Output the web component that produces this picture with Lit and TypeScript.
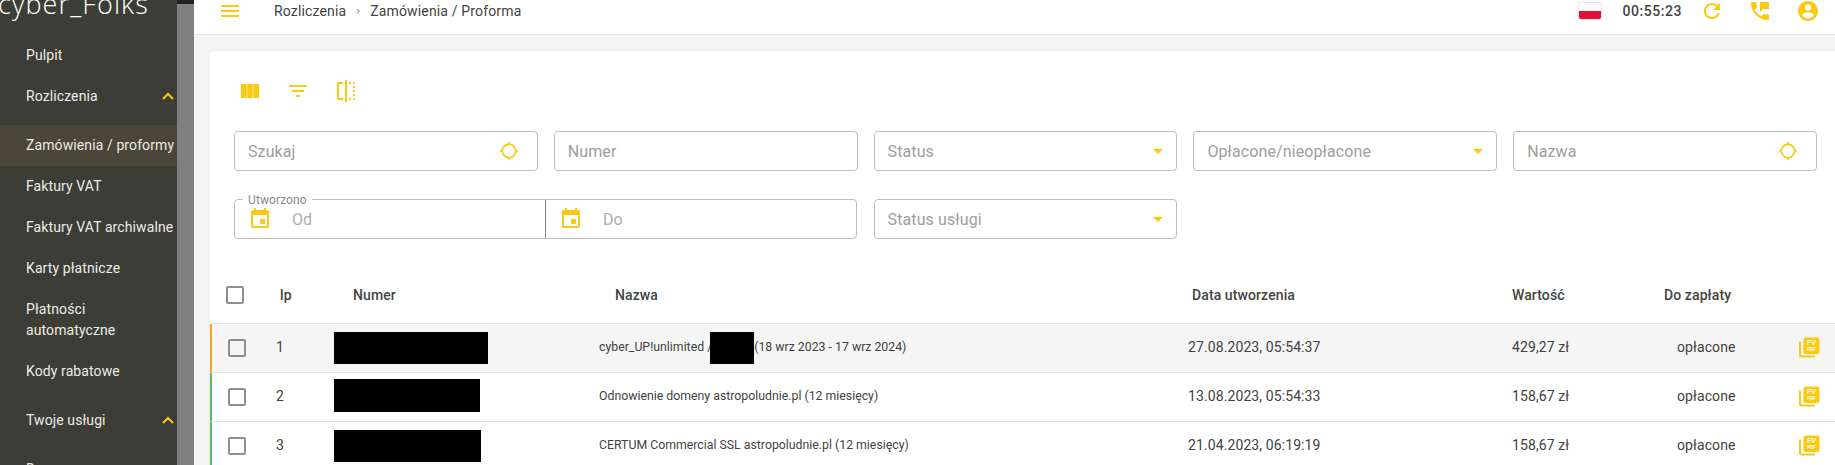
import { LitElement, html, css, svg } from "lit";
import { customElement } from "lit/decorators.js";

const P = {
  menu: "M3 18h18v-2H3v2zm0-5h18v-2H3v2zm0-7v2h18V6H3z",
  cols: "M10.3 19h5.4V5h-5.4zM4 19h5.7V5H4zM16.3 5v14H22V5z",
  filter: "M10 18h4v-2h-4v2zM3 6v2h18V6H3zm3 7h12v-2H6v2z",
  flip: "M15 21h2v-2h-2v2zm4-12h2V7h-2v2zM3 5v14c0 1.1.9 2 2 2h4v-2H5V5h4V3H5c-1.1 0-2 .9-2 2zm16-2v2h2c0-1.1-.9-2-2-2zm-8 20h2V1h-2v22zm8-6h2v-2h-2v2zM15 5h2V3h-2v2zm4 8h2v-2h-2v2zm0 8c1.1 0 2-.9 2-2h-2v2z",
  gps: "M20.94 11c-.46-4.17-3.77-7.48-7.94-7.94V1h-2v2.06C6.83 3.52 3.52 6.83 3.06 11H1v2h2.06c.46 4.17 3.77 7.48 7.94 7.94V23h2v-2.06c4.17-.46 7.48-3.77 7.94-7.94H23v-2h-2.06zM12 19c-3.87 0-7-3.13-7-7s3.13-7 7-7 7 3.13 7 7-3.13 7-7 7z",
  event: "M17 12h-5v5h5v-5zM16 1v2H8V1H6v2H5c-1.11 0-1.99.9-1.99 2L3 19c0 1.1.89 2 2 2h14c1.1 0 2-.9 2-2V5c0-1.1-.9-2-2-2h-1V1h-2zm3 18H5V8h14v11z",
  refresh: "M17.65 6.35C16.2 4.9 14.21 4 12 4c-4.42 0-7.99 3.58-7.99 8s3.57 8 7.99 8c3.73 0 6.84-2.55 7.73-6h-2.08c-.82 2.33-3.04 4-5.65 4-3.31 0-6-2.69-6-6s2.69-6 6-6c1.66 0 3.14.69 4.22 1.78L13 11h7V4l-2.35 2.35z",
  phone: "M20 15.5c-1.25 0-2.45-.2-3.57-.57-.35-.11-.74-.03-1.02.24l-2.2 2.2c-2.83-1.44-5.15-3.75-6.59-6.58l2.2-2.21c.28-.27.36-.66.25-1.01C8.7 6.45 8.5 5.25 8.5 4c0-.55-.45-1-1-1H4c-.55 0-1 .45-1 1 0 9.39 7.61 17 17 17 .55 0 1-.45 1-1v-3.5c0-.55-.45-1-1-1zM12 3v10l3-3h6V3h-9z",
  account: "M12 2C6.48 2 2 6.48 2 12s4.48 10 10 10 10-4.48 10-10S17.52 2 12 2zm0 3.2c1.8 0 3.2 1.4 3.2 3.2s-1.4 3.2-3.2 3.2-3.2-1.4-3.2-3.2 1.4-3.2 3.2-3.2zm0 14.2c-2.5 0-4.71-1.2-6-3.1.03-1.99 4-3.1 6-3.1 1.99 0 5.97 1.11 6 3.1-1.29 1.9-3.5 3.1-6 3.1z",
  up: "M2 9l5-5 5 5",
};

const icon = (d: string, size = 24) =>
  html`<svg class="ic" width=${size} height=${size} viewBox="0 0 24 24"><path d=${d}></path></svg>`;

const chevron = html`<svg class="chev" width="14" height="12" viewBox="0 0 14 12"><path d=${P.up}></path></svg>`;

const pdf = html`<svg class="pdf" width="21" height="21" viewBox="0 0 21 21">
  <path class="back" d="M1 4.5 V18 a1.5 1.5 0 0 0 1.5 1.5 H16" ></path>
  <rect class="front" x="4.5" y="0.5" width="16" height="16.5" rx="2.5"></rect>
  ${svg`<text class="fv" x="12.5" y="8.4" text-anchor="middle">FV</text><text class="pd" x="12.5" y="14" text-anchor="middle">PDF</text>`}
</svg>`;

interface Row { cls: string; lp: string; box: number; name: unknown; date: string; val: string; bh: string; }

const rows: Row[] = [
  { cls: "first", lp: "1", box: 154, bh: "h32", date: "27.08.2023, 05:54:37", val: "429,27 zł",
    name: html`cyber_UP!unlimited /<span class="mask"></span>(18 wrz 2023 - 17 wrz 2024)` },
  { cls: "ok", lp: "2", box: 146, bh: "h33", date: "13.08.2023, 05:54:33", val: "158,67 zł",
    name: "Odnowienie domeny astropoludnie.pl (12 miesięcy)" },
  { cls: "ok", lp: "3", box: 147, bh: "h32", date: "21.04.2023, 06:19:19", val: "158,67 zł",
    name: "CERTUM Commercial SSL astropoludnie.pl (12 miesięcy)" },
];

@customElement("app-root")
export class AppRoot extends LitElement {
  static styles = css`
    :host { display: block; width: 1835px; height: 465px; overflow: hidden; font-family: Roboto, "Liberation Sans", sans-serif; color: #424242; font-size: 14px; letter-spacing: .1px; }
    * { box-sizing: border-box; }
    .page { display: flex; height: 465px; overflow: hidden; background: #f5f5f5; }
    .ic { fill: #fbc90f; display: block; flex: none; }

    .side { width: 177px; flex: none; background: #3d3d38; color: #ecebe6; overflow: hidden; }
    .logo { line-height: 1; margin: -10px 0 0 -2px; height: 44.5px; font-family: "Open Sans", sans-serif; font-weight: 300; font-size: 27px; color: #fff; white-space: nowrap; letter-spacing: 1.1px; }
    .logo sup { font-size: 6px; vertical-align: 17px; letter-spacing: 0; color: #bbb; margin-left: 1px; }
    .item { display: flex; align-items: center; justify-content: space-between; height: 41px; padding: 0 2px 0 26px; white-space: nowrap; line-height: 21px; }
    .item.two { height: 62px; }
    .item.sel { background: #4a463a; }
    .item.gap { margin-top: 8.5px; }
    .item.gap2 { margin-top: 7.5px; }
    .chev { fill: none; stroke: #fbc90f; stroke-width: 2; display: block; flex: none; }

    .rail { width: 17px; flex: none; background: #808080; }
    .rail::before { content: ""; display: block; height: 4px; background: #222; }

    .main { flex: 1; min-width: 0; display: flex; flex-direction: column; }
    .top { height: 35px; flex: none; background: #fff; border-bottom: 1px solid #e0e0e0; padding: 0 15px 12px 24px; display: flex; align-items: center; }
    .crumbs { margin-left: 32px; display: flex; align-items: center; line-height: 22px; flex: 1; letter-spacing: .15px; }
    .sep { color: #999; font-size: 12px; width: 24px; text-align: center; font-family: "DejaVu Sans", sans-serif; }
    .flag { width: 24px; height: 18px; border-radius: 3px; border: 1px solid #eedfe2; overflow: hidden; background: linear-gradient(#fff 0 50%, #dc143c 50% 100%); }
    .time { font-weight: 500; letter-spacing: .55px; margin: 0 18px 0 20px; color: #444; }
    .tr { display: flex; align-items: center; }
    .tr .r2 { margin-left: 24px; }

    .card { flex: 1; margin: 16px 0 0 16px; background: #fff; border-radius: 4px 0 0 0; box-shadow: 0 0 2px rgba(0,0,0,.1); padding: 16px 18px 0 24px; }
    .tools { display: flex; height: 48px; margin-left: -9px; }
    .tool { width: 48.5px; display: flex; align-items: center; justify-content: center; }

    .filters { margin-top: 16px; display: grid; grid-template-columns: repeat(5, 1fr); gap: 28px 16px; }
    .f { height: 40px; border: 1px solid #bdbdbd; border-radius: 4px; display: flex; align-items: center; justify-content: space-between; padding: 0 18px 0 13px; font-size: 16px; color: #9e9e9e; }
    .arrow { width: 0; height: 0; border-left: 5px solid transparent; border-right: 5px solid transparent; border-top: 5px solid #fbc90f; }
    .f.sel { padding-right: 13px; }
    .range { grid-column: span 2; margin-right: 1px; position: relative; height: 40px; border: 1px solid #bdbdbd; border-radius: 4px; display: grid; grid-template-columns: 310px 1fr; color: #aeaeae; font-size: 16px; }
    .range .cell { display: flex; align-items: center; padding-left: 13px; }
    .range .cell + .cell { border-left: 1px solid #8a8a8a; }
    .range .cell span { margin-left: 20px; }
    .legend { position: absolute; left: 8px; top: -7px; background: #fff; padding: 0 5px; font-size: 12px; line-height: 14px; color: #8a8a8a; }

    .table { margin: 28px -18px 0 -24px; }
    .row { display: grid; grid-template-columns: 55px 67px 265px 589px 324px 152px 135px 1fr; align-items: center; height: 49px; border-bottom: 1px solid #e0e0e0; border-left: 2px solid transparent; }
    .row.head { height: 57px; font-weight: 500; color: #444; }
    .row.first { background: #f5f5f5; border-left-color: #f5a623; }
    .row.ok { border-left-color: #5cb85c; }
    .cb { width: 18px; height: 18px; border: 2px solid #8f8f8f; border-radius: 2px; }
    .row .c0 { padding-left: 16px; }
    .head .c0 { padding-left: 14px; }
    .row .c1 { padding-left: 9px; }
    .head .c1 { padding-left: 13px; }
    .head .c2 { padding-left: 19px; }
    .head .c3 { padding-left: 16px; }
    .head .c4 { padding-left: 4px; }
    .row .c6 { padding-left: 13px; }
    .head .c6 { padding-left: 0; }
    .row:not(.head) .t { padding-bottom: 2px; }
    .black { background: #000; height: 32px; }
    .black.h33 { height: 33px; margin-top: -3px; }
    .name { font-size: 12.3px; letter-spacing: 0; display: flex; align-items: center; white-space: nowrap; }
    .mask { display: inline-block; width: 44px; height: 32px; background: #000; margin-left: -2px; margin-top: 2px; }
    .pdf { display: block; margin-top: -1px; }
    .pdf .back { fill: none; stroke: #fbc90f; stroke-width: 2; }
    .pdf .front { fill: #fbc90f; }
    .pdf text { fill: #fff; font-weight: 700; font-family: Roboto, sans-serif; letter-spacing: 0; }
    .pdf .fv { font-size: 7.5px; }
    .pdf .pd { font-size: 4.5px; }
  `;

  render() {
    return html`<div class="page">
      <nav class="side">
        <div class="logo">cyber_Folks<sup>TM</sup></div>
        <div class="item">Pulpit</div>
        <div class="item"><span>Rozliczenia</span>${chevron}</div>
        <div class="item sel gap">Zamówienia / proformy</div>
        <div class="item">Faktury VAT</div>
        <div class="item">Faktury VAT archiwalne</div>
        <div class="item">Karty płatnicze</div>
        <div class="item two"><span>Płatności<br />automatyczne</span></div>
        <div class="item">Kody rabatowe</div>
        <div class="item gap2"><span>Twoje usługi</span>${chevron}</div>
        <div class="item gap">Domeny</div>
      </nav>
      <div class="rail"></div>
      <div class="main">
        <header class="top">
          ${icon(P.menu)}
          <div class="crumbs"><span>Rozliczenia</span><span class="sep">›</span><span>Zamówienia / Proforma</span></div>
          <div class="tr">
            <div class="flag"></div>
            <div class="time">00:55:23</div>
            ${icon(P.refresh)}
            <span class="r2">${icon(P.phone)}</span>
            <span class="r2">${icon(P.account)}</span>
          </div>
        </header>
        <section class="card">
          <div class="tools">
            <div class="tool">${icon(P.cols)}</div>
            <div class="tool">${icon(P.filter)}</div>
            <div class="tool">${icon(P.flip)}</div>
          </div>
          <div class="filters">
            <div class="f"><span>Szukaj</span>${icon(P.gps, 20)}</div>
            <div class="f"><span>Numer</span></div>
            <div class="f sel"><span>Status</span><i class="arrow"></i></div>
            <div class="f sel"><span>Opłacone/nieopłacone</span><i class="arrow"></i></div>
            <div class="f"><span>Nazwa</span>${icon(P.gps, 20)}</div>
            <div class="range">
              <div class="legend">Utworzono</div>
              <div class="cell">${icon(P.event)}<span>Od</span></div>
              <div class="cell">${icon(P.event)}<span>Do</span></div>
            </div>
            <div class="f sel"><span>Status usługi</span><i class="arrow"></i></div>
          </div>
          <div class="table">
            <div class="row head">
              <div class="c0"><div class="cb"></div></div>
              <div class="c1">lp</div>
              <div class="c2">Numer</div>
              <div class="c3">Nazwa</div>
              <div class="c4">Data utworzenia</div>
              <div class="c5">Wartość</div>
              <div class="c6">Do zapłaty</div>
              <div></div>
            </div>
            ${rows.map(
              (r) => html`<div class="row ${r.cls}">
                <div class="c0"><div class="cb"></div></div>
                <div class="c1 t">${r.lp}</div>
                <div class="c2"><div class="black ${r.bh}" style="width:${r.box}px"></div></div>
                <div class="name t">${r.name}</div>
                <div class="t">${r.date}</div>
                <div class="t">${r.val}</div>
                <div class="c6 t">opłacone</div>
                <div>${pdf}</div>
              </div>`
            )}
          </div>
        </section>
      </div>
    </div>`;
  }
}
